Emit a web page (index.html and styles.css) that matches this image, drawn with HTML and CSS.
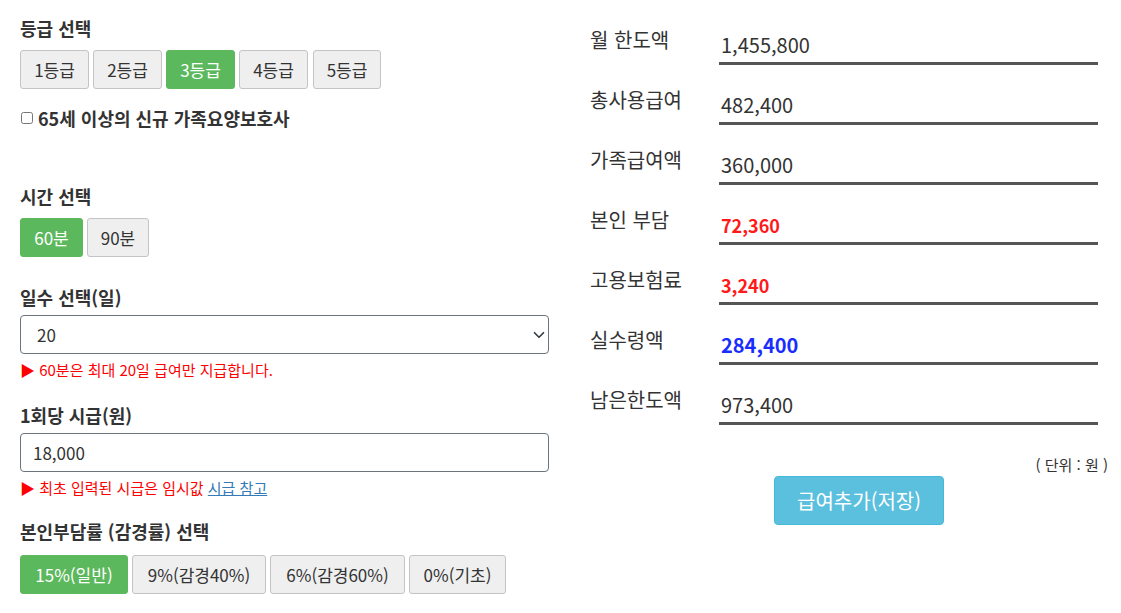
FILE: index.html
```html
<!DOCTYPE html>
<html lang="ko">
<head>
<meta charset="utf-8">
<title>급여 계산</title>
<link rel="stylesheet" href="styles.css">
</head>
<body>
<div class="page">
  <div class="left">
    <div class="heading h-grade">등급 선택</div>
    <div class="btn-group g-grade">
      <button class="btn w-grade">1등급</button>
      <button class="btn w-grade">2등급</button>
      <button class="btn w-grade active">3등급</button>
      <button class="btn w-grade">4등급</button>
      <button class="btn w-grade">5등급</button>
    </div>
    <label class="check"><input type="checkbox" class="cb"><span>65세 이상의 신규 가족요양보호사</span></label>

    <div class="heading h-time">시간 선택</div>
    <div class="btn-group g-time">
      <button class="btn w-time active">60분</button>
      <button class="btn w-time">90분</button>
    </div>

    <div class="heading h-days">일수 선택(일)</div>
    <div class="select-wrap">
      <select class="field select"><option>20</option></select>
      <svg class="chev" width="12" height="12" viewBox="0 0 16 16"><path d="M2 5l6 6 6-6" fill="none" stroke="#343a40" stroke-width="2.2" stroke-linecap="round" stroke-linejoin="round"/></svg>
    </div>
    <div class="note">▶ 60분은 최대 20일 급여만 지급합니다.</div>

    <div class="heading h-wage">1회당 시급(원)</div>
    <input class="field input" type="text" value="18,000">
    <div class="note">▶ 최초 입력된 시급은 임시값 <a class="link" href="#">시급 참고</a></div>

    <div class="heading h-rate">본인부담률 (감경률) 선택</div>
    <div class="btn-group g-rate">
      <button class="btn active r1">15%(일반)</button>
      <button class="btn r2">9%(감경40%)</button>
      <button class="btn r3">6%(감경60%)</button>
      <button class="btn r4">0%(기초)</button>
    </div>
  </div>

  <div class="right">
    <div class="row"><div class="label">월 한도액</div><div class="value">1,455,800</div></div>
    <div class="row"><div class="label">총사용급여</div><div class="value">482,400</div></div>
    <div class="row"><div class="label">가족급여액</div><div class="value">360,000</div></div>
    <div class="row"><div class="label">본인 부담</div><div class="value red">72,360</div></div>
    <div class="row"><div class="label">고용보험료</div><div class="value red">3,240</div></div>
    <div class="row"><div class="label">실수령액</div><div class="value blue">284,400</div></div>
    <div class="row"><div class="label">남은한도액</div><div class="value">973,400</div></div>
    <div class="unit">( 단위 : 원 )</div>
    <button class="save">급여추가(저장)</button>
  </div>
</div>
</body>
</html>
```
FILE: styles.css
```css
* { box-sizing: border-box; }
html, body { margin: 0; padding: 0; background: #fff; }
body {
  font-family: "Noto Sans CJK KR", "Noto Sans", sans-serif;
  color: #333;
  font-size: 16px;
}
.page { display: flex; width: 1121px; height: 613px; overflow: hidden; }
.left { width: 529px; margin-left: 20px; padding-top: 16px; }
.heading { font-weight: 700; font-size: 18px; line-height: 24px; color: #333; }
.btn-group { display: flex; gap: 4px; }
.btn {
  font-family: inherit;
  font-size: 17px;
  height: 39px;
  line-height: 37px;
  padding: 0;
  border: 1px solid #c4c4c4;
  border-radius: 3px;
  background: #efefef;
  color: #333;
  white-space: nowrap;
}
.btn.active { background: #5cb85c; border-color: #5cb85c; color: #fff; }
.w-grade { width: 69px; }
.w-grade:nth-child(5) { width: 68px; margin-left: 1px; }
.w-time { width: 63px; }
.w-time + .w-time { width: 62px; }
.g-grade { margin-top: 10px; }
.check { display: flex; align-items: center; margin-top: 17px; font-weight: 700; font-size: 18px; line-height: 24px; }
.cb { margin: 0 5px 0 1px; width: 12px; height: 12px; }
.h-time { margin-top: 54px; }
.g-time { margin-top: 10px; }
.h-days { margin-top: 28px; }
.select-wrap { position: relative; margin-top: 6px; }
.field {
  display: block;
  width: 529px;
  height: 39px;
  border: 1px solid #6c757d;
  border-radius: 4px;
  background: #fff;
  font-family: inherit;
  font-size: 17px;
  color: #333;
}
.select { appearance: none; -webkit-appearance: none; padding: 0 16px; }
.chev { position: absolute; right: 4px; top: 14px; }
.input { margin-top: 6px; padding: 0 12px; outline: none; }
.note { margin-top: 6px; font-size: 15px; line-height: 20px; color: #f00; }
.link { color: #337ab7; text-decoration: underline; }
.h-wage { margin-top: 23px; }
.h-rate { margin-top: 21px; }
.g-rate { margin-top: 12px; }
.r1 { width: 108px; }
.r2 { width: 134px; }
.r3 { width: 135px; }
.r4 { width: 97px; }

.right { margin-left: 41px; width: 518px; padding-top: 5px; display: flex; flex-direction: column; }
.row { display: flex; height: 60px; }
.label { width: 129px; font-size: 20px; line-height: 26px; margin-top: 22px; color: #333; white-space: nowrap; }
.value {
  width: 379px;
  border-bottom: 3px solid #555;
  font-size: 20px;
  line-height: 24px;
  padding: 28px 0 0 2px;
  color: #333;
}
.value.red { color: #ff1a1a; font-weight: 700; font-size: 18px; }
.value.blue { color: #1a2dff; font-weight: 700; }
.unit { text-align: right; font-size: 15px; line-height: 20px; margin-top: 30px; color: #333; }
.save {
  align-self: flex-start;
  margin-left: 184px;
  margin-top: 1px;
  width: 170px;
  height: 49px;
  border: 1px solid #46b8da;
  border-radius: 4px;
  background: #5bc0de;
  color: #fff;
  font-family: inherit;
  font-size: 20px;
}
```
